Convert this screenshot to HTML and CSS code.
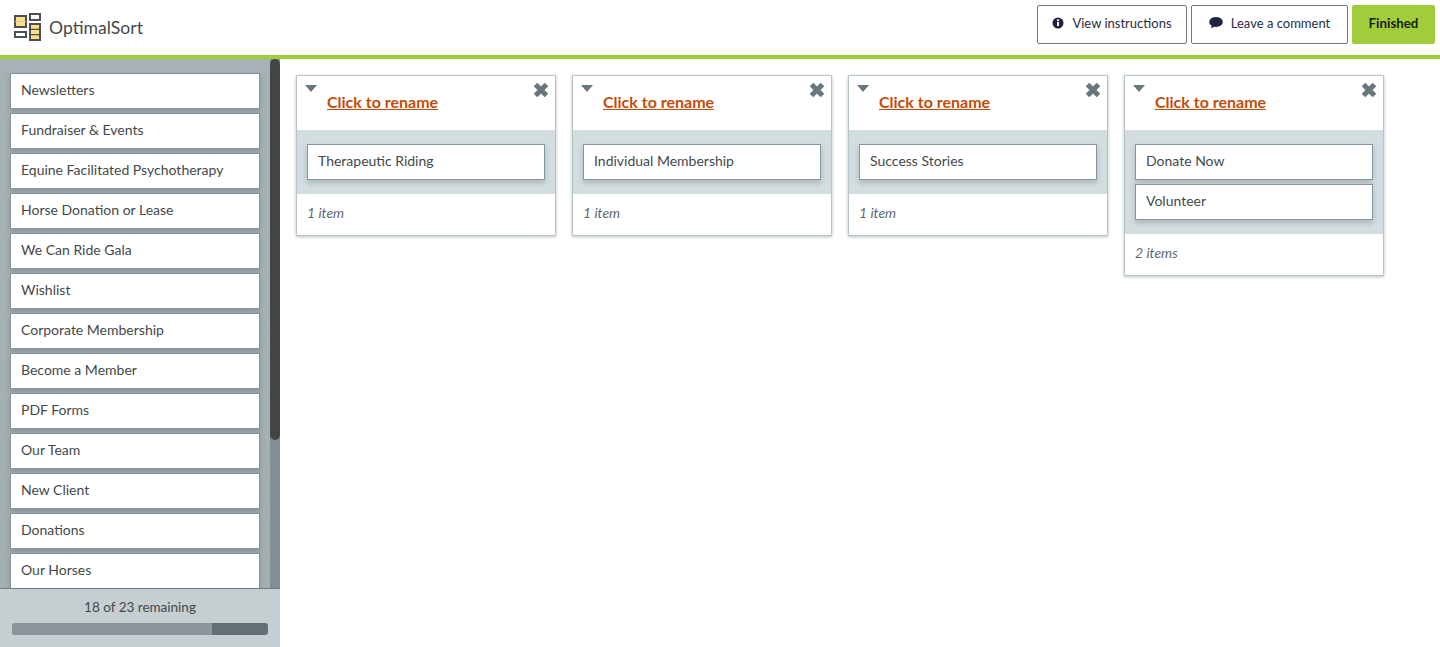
FILE: index.html
```html
<!DOCTYPE html>
<html lang="en">
<head>
<meta charset="utf-8">
<title>OptimalSort</title>
<link rel="stylesheet" href="styles.css">
</head>
<body>
<header class="topbar">
  <div class="brand">
    <svg class="logo" width="28" height="30" viewBox="0 0 28 30">
      <g stroke="#4a4f50" stroke-width="2">
        <rect x="1" y="3" width="11" height="11" fill="#fbdf8c"/>
        <path d="M1 8.5h11" stroke-width="1" stroke="#c9c4a8"/>
        <rect x="1" y="19" width="11" height="5" fill="#fff"/>
        <rect x="16" y="1" width="10" height="6" fill="#fff"/>
        <rect x="16" y="11" width="10" height="16" fill="#fbdf8c"/>
        <path d="M16 16.3h10M16 21.6h10" stroke-width="1.2"/>
      </g>
    </svg>
    <span class="brand-name">OptimalSort</span>
  </div>
  <nav class="actions">
    <button class="btn btn-instructions">
      <svg class="btn-icon" width="12" height="12" viewBox="0 0 12 12"><circle cx="6" cy="6" r="5.5" fill="#1f2240"/><rect x="5" y="5" width="2" height="4" fill="#fff"/><rect x="5" y="2.4" width="2" height="1.7" fill="#fff"/></svg>
      <span>View instructions</span>
    </button>
    <button class="btn btn-comment">
      <svg class="btn-icon" width="14" height="12" viewBox="0 0 14 12"><ellipse cx="7" cy="5" rx="6.8" ry="4.9" fill="#1f2240"/><path d="M3 8l-1 3.4 4.4-2.4z" fill="#1f2240"/></svg>
      <span>Leave a comment</span>
    </button>
    <button class="btn btn-finish">Finished</button>
  </nav>
</header>
<div class="workspace">
  <aside class="sidebar">
    <div class="list-wrap">
      <ul class="cards-list">
        <li class="sort-item">Newsletters</li>
        <li class="sort-item">Fundraiser &amp; Events</li>
        <li class="sort-item">Equine Facilitated Psychotherapy</li>
        <li class="sort-item">Horse Donation or Lease</li>
        <li class="sort-item">We Can Ride Gala</li>
        <li class="sort-item">Wishlist</li>
        <li class="sort-item">Corporate Membership</li>
        <li class="sort-item">Become a Member</li>
        <li class="sort-item">PDF Forms</li>
        <li class="sort-item">Our Team</li>
        <li class="sort-item">New Client</li>
        <li class="sort-item">Donations</li>
        <li class="sort-item">Our Horses</li>
      </ul>
      <div class="scroll-thumb"></div>
    </div>
    <div class="progress-box">
      <div class="progress-label">18 of 23 remaining</div>
      <div class="progress-track"><div class="progress-fill"></div></div>
    </div>
  </aside>
  <main class="board">
    <section class="group">
      <div class="group-head">
        <svg class="caret" width="12" height="7" viewBox="0 0 12 7"><path d="M0 0h12L6 7z"/></svg>
        <a class="rename" href="#">Click to rename</a>
        <svg class="close" width="18" height="18" viewBox="0 0 18 18"><path d="M3.5 3.5l11 11M14.5 3.5l-11 11"/></svg>
      </div>
      <div class="group-body"><div class="sort-item">Therapeutic Riding</div></div>
      <div class="group-foot">1 item</div>
    </section>
    <section class="group">
      <div class="group-head">
        <svg class="caret" width="12" height="7" viewBox="0 0 12 7"><path d="M0 0h12L6 7z"/></svg>
        <a class="rename" href="#">Click to rename</a>
        <svg class="close" width="18" height="18" viewBox="0 0 18 18"><path d="M3.5 3.5l11 11M14.5 3.5l-11 11"/></svg>
      </div>
      <div class="group-body"><div class="sort-item">Individual Membership</div></div>
      <div class="group-foot">1 item</div>
    </section>
    <section class="group">
      <div class="group-head">
        <svg class="caret" width="12" height="7" viewBox="0 0 12 7"><path d="M0 0h12L6 7z"/></svg>
        <a class="rename" href="#">Click to rename</a>
        <svg class="close" width="18" height="18" viewBox="0 0 18 18"><path d="M3.5 3.5l11 11M14.5 3.5l-11 11"/></svg>
      </div>
      <div class="group-body"><div class="sort-item">Success Stories</div></div>
      <div class="group-foot">1 item</div>
    </section>
    <section class="group">
      <div class="group-head">
        <svg class="caret" width="12" height="7" viewBox="0 0 12 7"><path d="M0 0h12L6 7z"/></svg>
        <a class="rename" href="#">Click to rename</a>
        <svg class="close" width="18" height="18" viewBox="0 0 18 18"><path d="M3.5 3.5l11 11M14.5 3.5l-11 11"/></svg>
      </div>
      <div class="group-body"><div class="sort-item">Donate Now</div><div class="sort-item">Volunteer</div></div>
      <div class="group-foot">2 items</div>
    </section>
  </main>
</div>
</body>
</html>
```
FILE: styles.css
```css
* { box-sizing: border-box; }
html, body { height: 100%; }
body {
  margin: 0;
  height: 647px;
  overflow: hidden;
  display: flex;
  flex-direction: column;
  background: #fff;
  color: #43494b;
  font-family: "Lato", "Open Sans", sans-serif;
  font-size: 14px;
}
.topbar {
  height: 59px;
  flex: none;
  display: flex;
  justify-content: space-between;
  align-items: flex-start;
  border-bottom: 4px solid #a2cd3a;
  padding: 5px 5px 0 14px;
}
.brand { display: flex; align-items: center; height: 44px; }
.logo { display: block; margin-top: 1px; }
.brand-name { margin-left: 7px; font-size: 17.6px; color: #45494b; }
.actions { display: flex; gap: 4px; }
.btn {
  height: 39px;
  display: flex;
  align-items: center;
  justify-content: center;
  gap: 8px;
  padding: 0 0 3px;
  background: #fff;
  border: 1px solid #6b7a85;
  border-radius: 2px;
  color: #2a2d45;
  font: inherit;
  font-size: 13px;
}
.btn-instructions { width: 150px; }
.btn-comment { width: 157px; }
.btn-finish { width: 83px; background: #a2cd3a; border-color: #a2cd3a; color: #16201a; font-weight: 700; font-size: 13.3px; }
.workspace { flex: 1; display: flex; min-height: 0; }
.sidebar { width: 280px; flex: none; display: flex; flex-direction: column; background: #a5b1b5; }
.list-wrap { position: relative; flex: 1; min-height: 0; overflow: hidden; background: linear-gradient(#a6b2b5, #a3afb2); }
.list-wrap::after { content: ""; position: absolute; top: 0; right: 0; bottom: 0; width: 10px; background: #838e91; }
.cards-list { list-style: none; margin: 0; padding: 14px 20px 0 10px; display: flex; flex-direction: column; gap: 4px; }
.sort-item {
  height: 36px;
  flex: none;
  display: flex;
  align-items: center;
  padding: 0 10px 4px;
  background: #fff;
  border: 1px solid #84949b;
  box-shadow: 0 3px 5px rgba(60, 75, 80, .25);
  color: #43494b;
}
.scroll-thumb {
  position: absolute;
  z-index: 1;
  top: 0;
  right: 0;
  width: 10px;
  height: 381px;
  background: #414547;
  border-radius: 5px;
}
.progress-box {
  height: 59px;
  flex: none;
  background: #c5ced0;
  border-top: 1px solid #6f7e84;
  padding: 9px 12px 0;
  text-align: center;
  position: relative;
}
.progress-label { line-height: 18px; color: #43494b; font-size: 13.5px; }
.progress-track { height: 12px; margin-top: 7px; background: #616f77; border-radius: 3px; overflow: hidden; }
.progress-fill { width: 78.2%; height: 100%; background: #8a969b; }
.board { flex: 1; display: flex; align-items: flex-start; gap: 16px; padding: 16px 16px 0; }
.group {
  width: 260px;
  flex: none;
  background: #fff;
  border: 1px solid #b7c6ca;
  box-shadow: 0 1px 3px rgba(60, 75, 80, .35);
}
.group-head { position: relative; height: 54px; padding: 14px 0 0 30px; }
.caret { position: absolute; left: 8px; top: 9px; fill: #68767d; }
.close { position: absolute; right: 5px; top: 5px; fill: none; stroke: #68767d; stroke-width: 5; }
.rename { color: #c24d08; font-size: 16px; font-weight: 700; line-height: 24px; text-decoration: underline; }
.group-body { display: flex; flex-direction: column; gap: 4px; padding: 14px 10px; background: #d3dcdf; }
.group-foot { height: 41px; padding: 0 0 4px 10px; display: flex; align-items: center; font-style: italic; color: #5e686c; }
```
